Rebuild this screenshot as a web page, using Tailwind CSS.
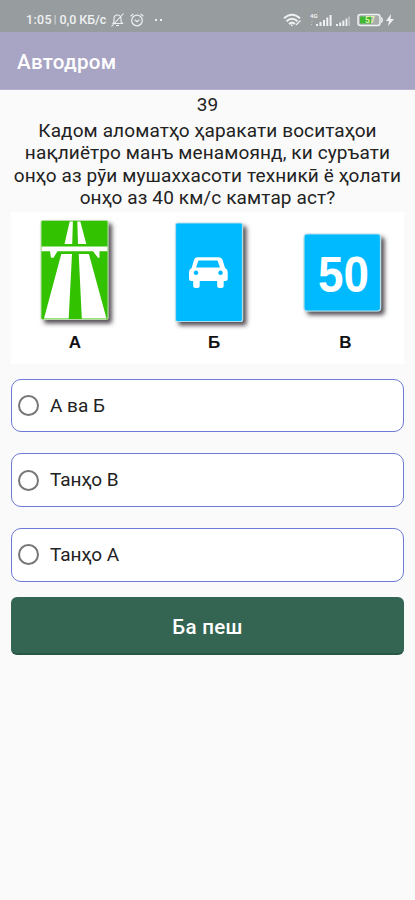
<!DOCTYPE html>
<html lang="tg">
<head>
    <meta charset="UTF-8">
    <meta name="viewport" content="width=device-width, initial-scale=1.0">
    <title>Автодром</title>
    <script src="https://cdn.jsdelivr.net/npm/@tailwindcss/browser@4"></script>
</head>
<body class="bg-[#fafafa] min-h-screen overflow-hidden font-['Roboto',sans-serif] text-[#222]">
    <!-- Status bar -->
    <div class="h-8 bg-[#979c9e] flex items-center justify-between pl-[26px] pr-[21px] pt-2 text-[#eff1f2]">
        <div class="flex items-center">
            <div class="w-[85px] flex items-center text-[12.5px] leading-4 font-medium whitespace-nowrap">
                <span class="tracking-[0.3px]">1:05</span>
                <span class="ml-[2px] text-[11px] opacity-70">|</span>
                <span class="ml-[3px] tracking-[-0.1px]">0,0 КБ/с</span>
            </div>
            <svg class="w-[13px] h-[14px]" viewBox="0 0 13 14" fill="none" stroke="currentColor" stroke-width="1.1">
                <path d="M2 10.500h9.500L10 8.500V5.500a3.500 3.500 0 0 0-7 0v3zM5 12.500h3M12.500.500l-12 13"/>
            </svg>
            <svg class="ml-[6px] w-[14px] h-[14px]" viewBox="0 0 14 14" fill="none" stroke="currentColor" stroke-width="1.2">
                <circle cx="7" cy="7.500" r="5.300"/>
                <path d="M.600 3.200 3.400.900M13.400 3.200 10.600.900M4.800 6.700 7 8.600l2.500-2"/>
            </svg>
            <div class="ml-[11px] -mt-px flex gap-[3px]">
                <span class="size-[2px] bg-[#eff1f2]"></span>
                <span class="size-[2px] bg-[#eff1f2]"></span>
            </div>
        </div>
        <div class="flex items-center -mt-px">
            <svg class="w-[19px] h-[14px]" viewBox="0 0 19 14" fill="none" stroke="currentColor" stroke-width="2">
                <path d="M1 5.300q8-7 16 0M3.500 8.200q5.500-5 11 0M6 11q3-2.800 6 0"/>
                <path d="m8 11.500 1.500 1.500M13 12l4.500-4.500" stroke-width="1.300"/>
            </svg>
            <svg class="ml-[7px] w-[24px] h-[14px]" viewBox="0 0 24 14" fill="currentColor">
                <text x="1" y="5" font-size="6" font-weight="700">4G</text>
                <path d="M7 11h2v2H7zM10.500 9h2v4h-2zM14 7h2v6h-2zM17.300 4.500h2V13h-2zM20.600 2h2v11h-2z"/>
                <path d="M2.500 8h1v1h-1zM2 11h1v1H2z" opacity=".5"/>
            </svg>
            <svg class="ml-[3px] w-[15px] h-[14px]" viewBox="0 0 15 14" fill="currentColor">
                <path d="M0 11h2v2H0zM3.200 9.500h2V13h-2zM6.400 7.500h2V13h-2zM9.600 5.500h1.800V13H9.600z"/>
                <path d="M12.400 3.500h1.500V13h-1.500z" opacity=".5"/>
            </svg>
            <svg class="ml-[6px] w-[27px] h-[14px]" viewBox="0 0 27 14">
                <rect x="1" y="1.500" width="22" height="11" rx="2.500" fill="#a9aead" stroke="#eff1f2" stroke-width="1.500"/>
                <path d="M24 4.500q2.500 2.500 0 5" stroke="#eff1f2" stroke-width="1.500" fill="none"/>
                <path d="M3 3.500h11v7H3z" fill="#3fb833"/>
                <text x="8" y="10" font-size="8.500" font-weight="700" fill="#e3f5a9">57</text>
            </svg>
            <svg class="ml-[2px] w-[8px] h-[12px]" viewBox="0 0 8 12" fill="currentColor"><path d="M5 0 0 7h3l-1 5 6-7H4.500z"/></svg>
        </div>
    </div>

    <!-- App bar -->
    <header class="h-[58px] bg-[#a7a4c4] border-b border-[#b5b3cd] flex items-center px-[17px] pt-[3px]">
        <h1 class="text-[20.5px] font-medium text-white tracking-[0.3px]">Автодром</h1>
    </header>

    <main class="px-[11px] pt-[3px]">
        <p class="text-center text-[19px] leading-[23px]">39</p>
        <p class="-mx-2 mt-[4px] text-center text-[19px] leading-[22.3px] tracking-[0.12px] whitespace-nowrap">
            Кадом аломатҳо ҳаракати воситаҳои<br>
            нақлиётро манъ менамоянд, ки суръати<br>
            онҳо аз рӯи мушаххасоти техникӣ ё ҳолати<br>
            онҳо аз 40 км/с камтар аст?
        </p>

        <!-- Road signs -->
        <svg class="block mt-[3px] w-[393px] h-[152px] bg-white" viewBox="11 212 393 152" font-family="Liberation Sans, sans-serif" font-weight="700">
            <defs>
                <filter id="shadow" x="-20%" y="-20%" width="150%" height="150%">
                    <feDropShadow dx="3.500" dy="3.500" stdDeviation="2" flood-color="#3b3338" flood-opacity=".85"/>
                </filter>
            </defs>
            <rect x="41" y="220.500" width="67" height="99" rx="1.500" fill="#33c200" stroke="#b5dca8" stroke-width="1" filter="url(#shadow)"/>
            <g fill="#fff">
                <path d="M69.700 221.500h3.200l-.700 22.500h-7.700zM77.300 221.500h3l6 22.500H78z"/>
                <path d="M41.500 246.500h66v4.700h-8v6.600h-1.500l-5-6.600H57.500l-4 6.600H51l-1-6.600h-8.500z"/>
                <path d="M61.300 254H72l-3.300 64.500H44zM78.700 254h10.200L106.500 318.500H81.800z"/>
            </g>
            <rect x="175.500" y="223" width="67" height="98.500" rx="2" fill="#00baff" stroke="#b3dde8" stroke-width="1.200" filter="url(#shadow)"/>
            <path fill="#fff" fill-rule="evenodd" d="M197 257.300h22q2.500 0 3.500 2.500l2.500 8.200q2.700 1 2.700 4v6.500q0 2.500-2.500 2.500h-1.500v5q0 2-2 2h-2.500q-2 0-2-2v-5h-17.500v5q0 2-2 2h-2.500q-2 0-2-2v-5H191q-2 0-2-2.500V272q0-3 2.700-4l2.300-8.200q1-2.500 3-2.500zM198.500 260.500l-2.500 7h24l-2.500-7zM196 270.500a2.300 2.300 0 1 0 .01 0zM220.500 270.500a2.300 2.300 0 1 0 .01 0z"/>
            <rect x="304" y="234" width="76.500" height="77" rx="3" fill="#00baff" stroke="#b3dde8" stroke-width="1.200" filter="url(#shadow)"/>
            <text x="318" y="291.500" font-size="50" textLength="51" lengthAdjust="spacingAndGlyphs" fill="#fff">50</text>
            <g font-size="17" fill="#111" text-anchor="middle">
                <text x="75" y="348">А</text>
                <text x="214" y="348">Б</text>
                <text x="345.500" y="348">В</text>
            </g>
        </svg>

        <!-- Answers -->
        <div class="mt-[14.5px] flex flex-col gap-[21.5px] text-[19px]">
            <label class="h-[53.3px] bg-white border-[1.5px] border-[#6f79d6] rounded-[10px] flex items-center pl-[6px]">
                <span class="size-[21px] rounded-full border-2 border-[#777]"></span>
                <span class="ml-[11px] pt-px">А ва Б</span>
            </label>
            <label class="h-[53.3px] bg-white border-[1.5px] border-[#6f79d6] rounded-[10px] flex items-center pl-[6px]">
                <span class="size-[21px] rounded-full border-2 border-[#777]"></span>
                <span class="ml-[11px] pt-px">Танҳо В</span>
            </label>
            <label class="h-[53.3px] bg-white border-[1.5px] border-[#6f79d6] rounded-[10px] flex items-center pl-[6px]">
                <span class="size-[21px] rounded-full border-2 border-[#777]"></span>
                <span class="ml-[11px] pt-px">Танҳо А</span>
            </label>
        </div>

        <button class="mt-[15.5px] w-full h-[58px] rounded-[6px] bg-[#346552] border-b-2 border-[#265744] text-white text-[20.5px] font-medium tracking-[0.3px] pt-[4px]">Ба пеш</button>
    </main>
</body>
</html>
